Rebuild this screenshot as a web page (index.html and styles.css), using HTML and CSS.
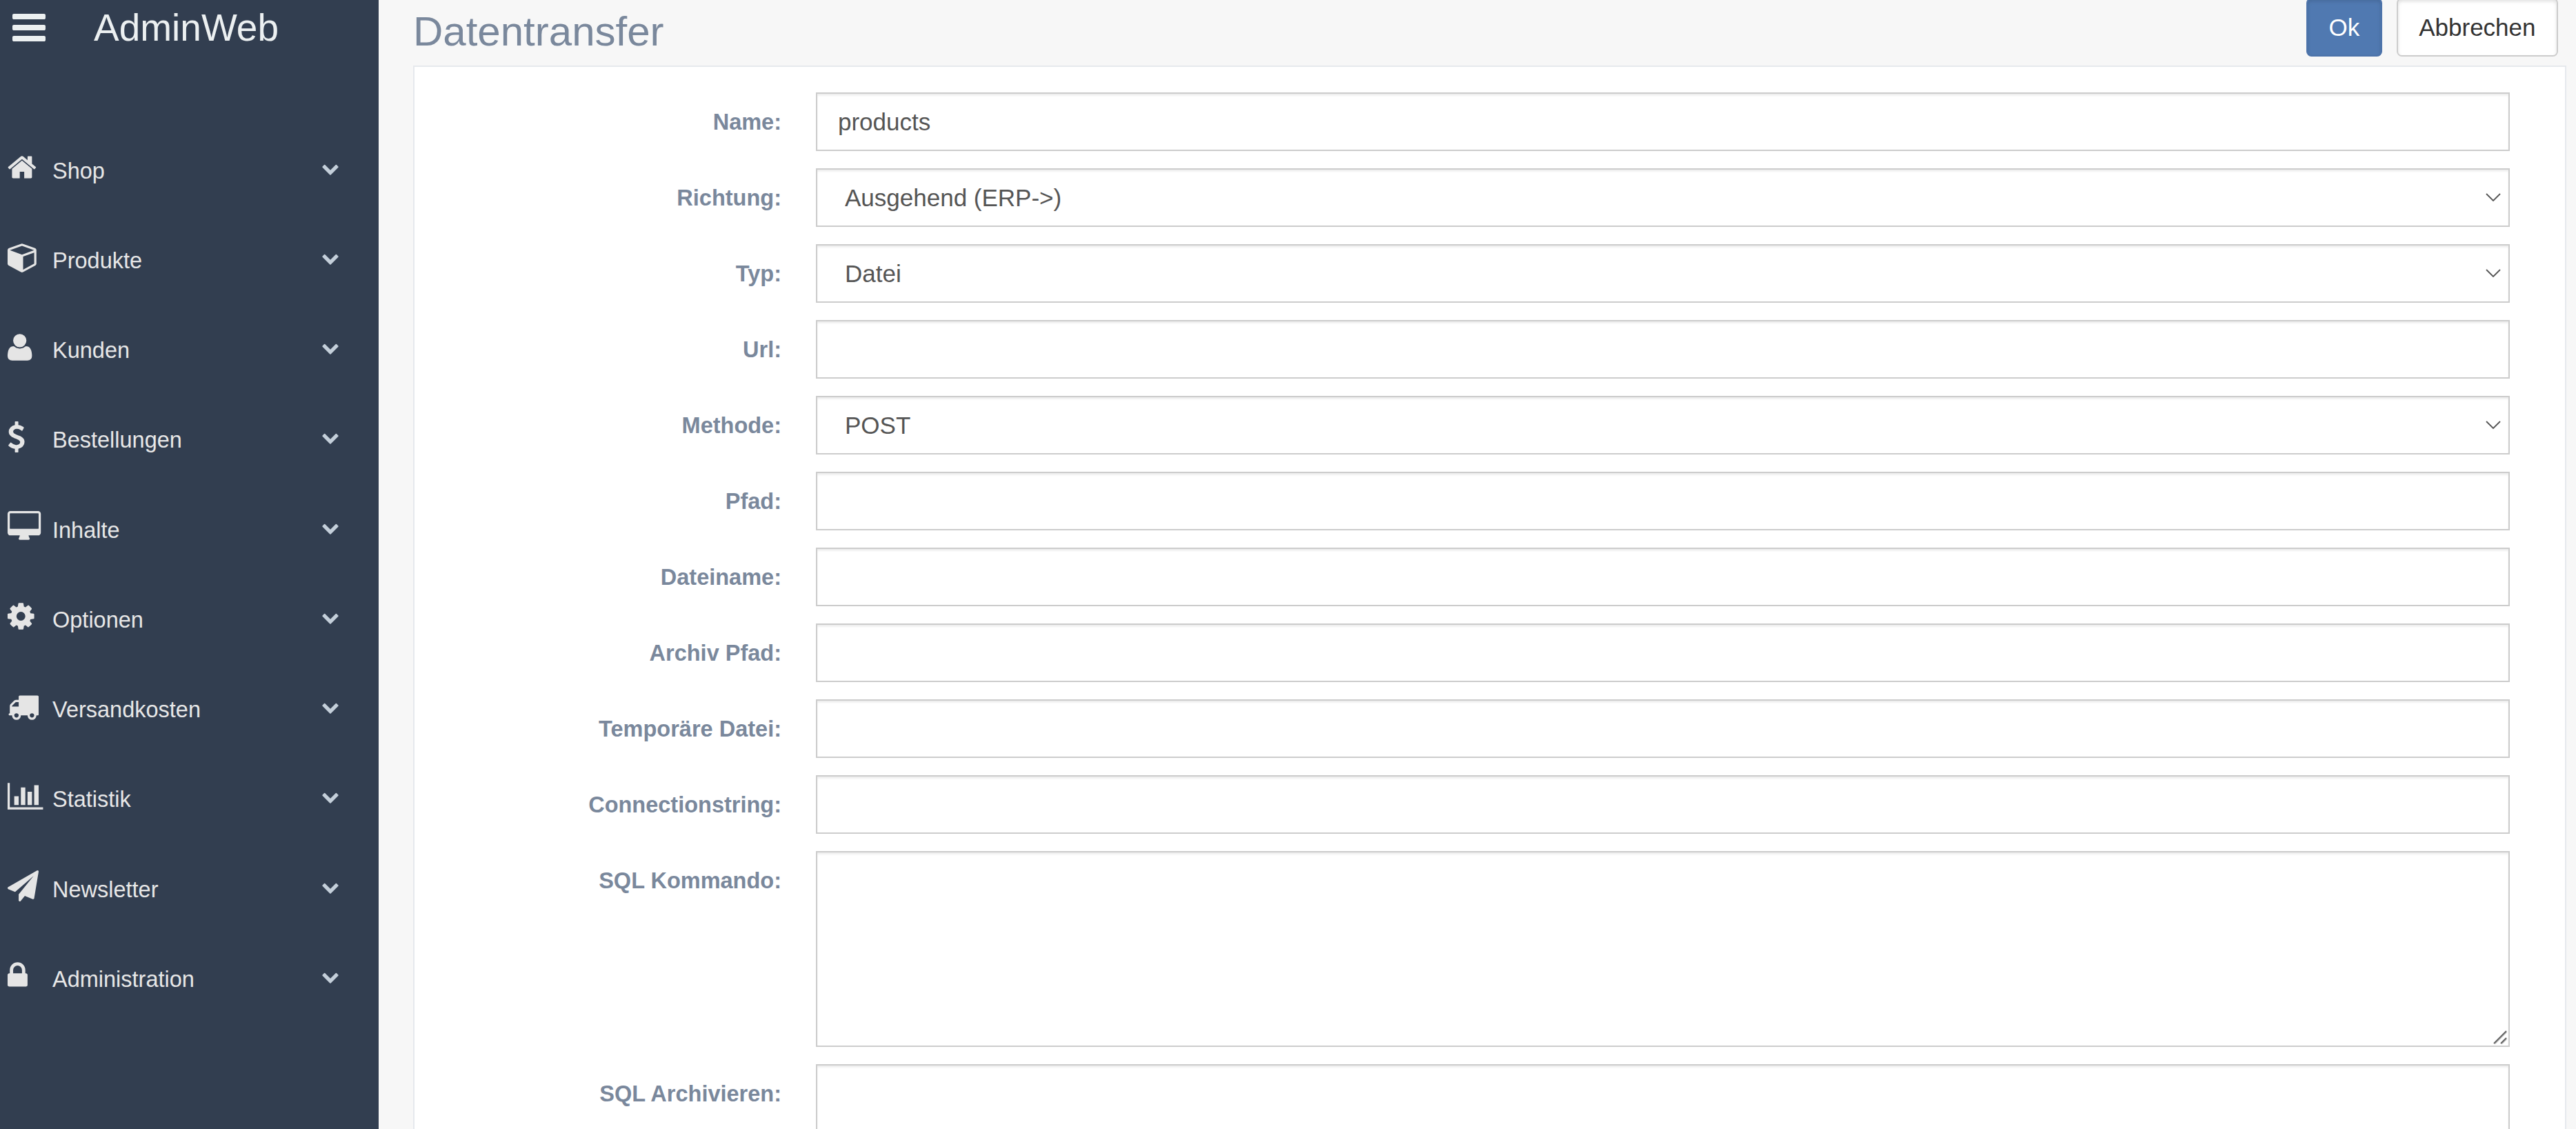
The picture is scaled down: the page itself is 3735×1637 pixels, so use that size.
FILE: index.html
```html
<!DOCTYPE html>
<html lang="de">
<head>
    <meta charset="UTF-8">
    <meta name="viewport" content="width=device-width, initial-scale=1.0">
    <title>AdminWeb - Datentransfer</title>
    <link rel="stylesheet" href="styles.css">
</head>
<body>
    <svg class="sprite">
        <symbol id="chevron" viewBox="0 0 1792 1792"><path d="M1683 808l-742 741q-19 19-45 19t-45-19l-742-741q-19-19-19-45.5t19-45.5l166-165q19-19 45-19t45 19l531 531 531-531q19-19 45-19t45 19l166 165q19 19 19 45.5t-19 45.5z"/></symbol>
        <symbol id="arrow" viewBox="0 0 22 12"><path d="M1 1l10 10 10-10" fill="none" stroke="#555" stroke-width="1.8"/></symbol>
        <symbol id="grip" viewBox="0 0 20 20"><path d="M2.5 19.5l17-17M12.5 19.5l7-7" fill="none" stroke="#c4c4c4" stroke-width="1.5"/><path d="M1 19L19 1M11 19l8-8" fill="none" stroke="#636363" stroke-width="2"/></symbol>
    </svg>
    <aside class="sidebar">
        <div class="brand">
            <svg class="menu-toggle" viewBox="128 256 1536 1280"><path d="M1664 1344v128q0 26-19 45t-45 19h-1408q-26 0-45-19t-19-45v-128q0-26 19-45t45-19h1408q26 0 45 19t19 45zm0-512v128q0 26-19 45t-45 19h-1408q-26 0-45-19t-19-45v-128q0-26 19-45t45-19h1408q26 0 45 19t19 45zm0-512v128q0 26-19 45t-45 19h-1408q-26 0-45-19t-19-45v-128q0-26 19-45t45-19h1408q26 0 45 19t19 45z"/></svg>
            <span>AdminWeb</span>
        </div>
        <ul class="nav">
            <li>
                <svg class="icon" viewBox="64 0 1792 1792"><path d="M1472 992v480q0 26-19 45t-45 19h-384v-384h-256v384h-384q-26 0-45-19t-19-45v-480q0-1 .5-3t.5-3l575-474 575 474q1 2 1 6zm223-69l-62 74q-8 9-21 11h-3q-13 0-21-7l-692-577-692 577q-12 8-24 7-13-2-21-11l-62-74q-8-10-7-23.5t11-21.5l719-599q32-26 76-26t76 26l244 204v-195q0-14 9-23t23-9h192q14 0 23 9t9 23v408l219 182q10 8 11 21.5t-7 23.5z"/></svg>
                <span>Shop</span><svg class="chevron"><use href="#chevron"/></svg>
            </li>
            <li>
                <svg class="icon" viewBox="0 0 1792 1792"><path d="M896 1629l640-349v-636l-640 233v752zm-64-865l698-254-698-254-698 254 698 254zm832-252v768q0 35-18 65t-49 47l-704 384q-28 16-61 16t-61-16l-704-384q-31-17-49-47t-18-65v-768q0-40 23-73t61-47l704-256q22-8 44-8t44 8l704 256q38 14 61 47t23 73z"/></svg>
                <span>Produkte</span><svg class="chevron"><use href="#chevron"/></svg>
            </li>
            <li>
                <svg class="icon" viewBox="0 0 1792 1792"><path transform="matrix(1 0 0 -1 0 1536)" d="M1408 131q0-120-73-189.5t-194-69.5h-874q-121 0-194 69.5t-73 189.5q0 53 3.5 103.5t14 109t26.5 108.5t43 97.5t62 81t85.5 53.5t111.5 20q9 0 42-21.5t74.5-48t108-48t133.5-21.5t133.5 21.5t108 48t74.5 48t42 21.5q61 0 111.5-20t85.5-53.5t62-81t43-97.5t26.5-108.5t14-109t3.5-103.5zM1088 1024q0-159-112.5-271.5t-271.5-112.5t-271.5 112.5t-112.5 271.5t112.5 271.5t271.5 112.5t271.5-112.5t112.5-271.5z"/></svg>
                <span>Kunden</span><svg class="chevron"><use href="#chevron"/></svg>
            </li>
            <li>
                <svg class="icon" viewBox="384 0 1792 1792"><path d="M1362 1185q0 153-99.5 263.5t-258.5 136.5v175q0 14-9 23t-23 9h-135q-13 0-22.5-9.5t-9.5-22.5v-175q-66-9-127.5-31t-101.5-44.5-74-48-46.5-37.5-17.5-18q-17-21-2-41l103-135q7-10 23-12 15-2 24 9l2 2q113 99 243 125 37 8 74 8 81 0 142.5-43t61.5-122q0-28-15-53t-33.5-42-58.5-37.5-66-32-80-32.5q-39-16-61.5-25t-61.5-26.5-62.5-31-56.5-35.5-53.5-42.5-43.5-49-35.5-58-21-66.5-8.5-78q0-138 98-242t255-134v-180q0-13 9.5-22.5t22.5-9.5h135q14 0 23 9t9 23v176q57 6 110.5 23t87 33.5 63.5 37.5 39 29 15 14q17 18 5 38l-81 146q-8 15-23 16-14 3-27-7-3-3-14.5-12t-39-26.5-58.5-32-74.5-26-85.5-11.5q-95 0-155 43t-60 111q0 26 8.5 48t29.5 41.5 39.5 33 56 31 60.5 27 70 27.5q53 20 81 31.5t76 35 75.5 42.5 62 50 53 63.5 31.5 76.5 13 94z"/></svg>
                <span>Bestellungen</span><svg class="chevron"><use href="#chevron"/></svg>
            </li>
            <li>
                <svg class="icon" viewBox="-64 0 1792 1792"><path d="M1728 992v-832q0-13-9.5-22.5t-22.5-9.5h-1600q-13 0-22.5 9.5t-9.5 22.5v832q0 13 9.5 22.5t22.5 9.5h1600q13 0 22.5-9.5t9.5-22.5zm128-832v1088q0 66-47 113t-113 47h-544q0 37 16 77.5t32 71 16 43.5q0 26-19 45t-45 19h-512q-26 0-45-19t-19-45q0-14 16-44t32-70 16-78h-544q-66 0-113-47t-47-113v-1088q0-66 47-113t113-47h1600q66 0 113 47t47 113z"/></svg>
                <span>Inhalte</span><svg class="chevron"><use href="#chevron"/></svg>
            </li>
            <li>
                <svg class="icon" viewBox="128 0 1792 1792"><path d="M1152 896q0-106-75-181t-181-75-181 75-75 181 75 181 181 75 181-75 75-181zm512-109v222q0 12-8 23t-20 13l-185 28q-19 54-39 91 35 50 107 138 10 12 10 25t-9 23q-27 37-99 108t-94 71q-12 0-26-9l-138-108q-44 23-91 38-16 136-29 186-7 28-36 28h-222q-14 0-24.5-8.5t-11.5-21.5l-28-184q-49-16-90-37l-141 107q-10 9-25 9-14 0-25-11-126-114-165-168-7-10-7-23 0-12 8-23 15-21 51-66.5t54-70.5q-27-50-41-99l-183-27q-13-2-21-12.5t-8-23.5v-222q0-12 8-23t19-13l186-28q14-46 39-92-40-57-107-138-10-12-10-24 0-10 9-23 26-36 98.5-107.5t94.5-71.5q13 0 26 10l138 107q44-23 91-38 16-136 29-186 7-28 36-28h222q14 0 24.5 8.5t11.5 21.5l28 184q49 16 90 37l142-107q9-9 24-9 13 0 25 10 129 119 165 170 7 8 7 22 0 12-8 23-15 21-51 66.5t-54 70.5q26 50 41 98l183 28q13 2 21 12.5t8 23.5z"/></svg>
                <span>Optionen</span><svg class="chevron"><use href="#chevron"/></svg>
            </li>
            <li>
                <svg class="icon" viewBox="0 0 1792 1792"><path d="M640 1408q0-52-38-90t-90-38-90 38-38 90 38 90 90 38 90-38 38-90zm-384-512h384v-256h-158q-13 0-22 9l-195 195q-9 9-9 22v30zm1280 512q0-52-38-90t-90-38-90 38-38 90 38 90 90 38 90-38 38-90zm256-1088v1024q0 15-4 26.5t-13.5 18.5-16.5 11.5-23.5 6-22.5 2-25.5 0-22.5-.5q0 106-75 181t-181 75-181-75-75-181h-384q0 106-75 181t-181 75-181-75-75-181h-64q-3 0-22.5.5t-25.5 0-22.5-2-23.5-6-16.5-11.5-13.5-18.5-4-26.5q0-26 19-45t45-19v-320q0-8-.5-35t0-38 2.5-34.5 6.5-37 14-30.5 22.5-30l198-198q19-19 50.5-32t58.5-13h160v-192q0-26 19-45t45-19h1024q26 0 45 19t19 45z"/></svg>
                <span>Versandkosten</span><svg class="chevron"><use href="#chevron"/></svg>
            </li>
            <li>
                <svg class="icon" viewBox="0 0 1792 1792"><path d="M640 896v512h-256v-512zM1024 384v1024h-256v-1024zM2048 1536v128h-2048v-1536h128v1408zM1408 640v768h-256v-768zM1792 256v1152h-256v-1152z"/></svg>
                <span>Statistik</span><svg class="chevron"><use href="#chevron"/></svg>
            </li>
            <li>
                <svg class="icon" viewBox="0 0 1792 1792"><path d="M1764 11q33 24 27 64l-256 1536q-5 29-32 45-14 8-31 8-11 0-24-5l-453-185-242 295q-18 23-49 23-13 0-22-4-19-7-30.5-23.5t-11.5-36.5v-349l864-1059-1069 925-395-162q-37-14-40-55-2-40 32-59l1664-960q15-9 32-9 20 0 36 11z"/></svg>
                <span>Newsletter</span><svg class="chevron"><use href="#chevron"/></svg>
            </li>
            <li>
                <svg class="icon" viewBox="320 0 1792 1792"><path d="M640 768h512v-192q0-106-75-181t-181-75-181 75-75 181v192zm832 96v576q0 40-28 68t-68 28h-960q-40 0-68-28t-28-68v-576q0-40 28-68t68-28h32v-192q0-184 132-316t316-132 316 132 132 316v192h32q40 0 68 28t28 68z"/></svg>
                <span>Administration</span><svg class="chevron"><use href="#chevron"/></svg>
            </li>
        </ul>
    </aside>
    <main>
        <header>
            <h1>Datentransfer</h1>
            <div class="buttons">
                <button class="btn btn-primary">Ok</button>
                <button class="btn">Abbrechen</button>
            </div>
        </header>
        <form class="panel">
            <div class="row">
                <label for="name">Name:</label>
                <input id="name" type="text" value="products">
            </div>
            <div class="row">
                <label for="richtung">Richtung:</label>
                <div class="field">
                    <select id="richtung"><option>Ausgehend (ERP-&gt;)</option></select>
                    <svg class="arrow"><use href="#arrow"/></svg>
                </div>
            </div>
            <div class="row">
                <label for="typ">Typ:</label>
                <div class="field">
                    <select id="typ"><option>Datei</option></select>
                    <svg class="arrow"><use href="#arrow"/></svg>
                </div>
            </div>
            <div class="row">
                <label for="url">Url:</label>
                <input id="url" type="text">
            </div>
            <div class="row">
                <label for="methode">Methode:</label>
                <div class="field">
                    <select id="methode"><option>POST</option></select>
                    <svg class="arrow"><use href="#arrow"/></svg>
                </div>
            </div>
            <div class="row">
                <label for="pfad">Pfad:</label>
                <input id="pfad" type="text">
            </div>
            <div class="row">
                <label for="dateiname">Dateiname:</label>
                <input id="dateiname" type="text">
            </div>
            <div class="row">
                <label for="archiv">Archiv Pfad:</label>
                <input id="archiv" type="text">
            </div>
            <div class="row">
                <label for="temp">Temporäre Datei:</label>
                <input id="temp" type="text">
            </div>
            <div class="row">
                <label for="connection">Connectionstring:</label>
                <input id="connection" type="text">
            </div>
            <div class="row">
                <label for="sql">SQL Kommando:</label>
                <div class="field">
                    <textarea id="sql"></textarea>
                    <svg class="grip"><use href="#grip"/></svg>
                </div>
            </div>
            <div class="row">
                <label for="sqlarchiv">SQL Archivieren:</label>
                <textarea id="sqlarchiv"></textarea>
            </div>
        </form>
    </main>
</body>
</html>
```
FILE: styles.css
```css
* {
    box-sizing: border-box;
}

body {
    display: flex;
    height: 1637px;
    margin: 0;
    overflow: hidden;
    background-color: #f7f7f7;
    font-family: "Liberation Sans", Arial, sans-serif;
    font-size: 32.5px;
    color: #73879c;
}

.sprite {
    display: none;
}

.sidebar {
    flex: none;
    width: 549px;
    height: 1637px;
    background-color: #323e50;
    color: #e7e7e7;
}

.brand {
    display: flex;
    align-items: center;
    gap: 70px;
    height: 80px;
    padding-left: 18px;
    color: #ecf0f1;
    font-size: 55px;
}

.menu-toggle {
    width: 48px;
    height: 40px;
    fill: #ecf0f1;
}

.nav {
    list-style: none;
    margin: 102px 0 0;
    padding: 0;
}

.nav li {
    display: flex;
    align-items: center;
    height: 130.25px;
    padding: 0 57px 0 11px;
}

.nav span {
    padding-top: 2px;
}

.icon {
    width: 45px;
    height: 45px;
    margin: 0 20px 9px 0;
    overflow: visible;
    fill: #e5e5e5;
}

.chevron {
    width: 26px;
    height: 26px;
    margin: 0 0 7px auto;
    fill: #c4cfda;
}

main {
    flex: 1;
    height: 1637px;
    padding: 0 14px 0 50px;
    overflow: hidden;
}

header {
    display: flex;
    justify-content: space-between;
    height: 95px;
    padding-right: 12px;
}

h1 {
    margin: 11px 0 0;
    font-size: 60px;
    font-weight: normal;
    line-height: 69px;
    color: #7a889c;
}

.buttons {
    display: flex;
    gap: 21px;
    margin-top: -3px;
}

.btn {
    height: 85px;
    padding: 0 30.5px;
    border: 2px solid #ccc;
    border-radius: 7.5px;
    background-color: #fff;
    box-shadow: inset 0 3px 5px rgba(0, 0, 0, 0.125);
    font-family: inherit;
    font-size: 35px;
    color: #333;
}

.btn-primary {
    border-color: #4d73aa;
    background-color: #5079b1;
    color: #fff;
}

.panel {
    padding: 37px 80px 0 0;
    border: 2px solid #e6e9ed;
    background-color: #fff;
}

.row {
    display: grid;
    grid-template-columns: 532px 1fr;
    column-gap: 50px;
    margin-bottom: 25px;
}

label {
    height: 85px;
    line-height: 86px;
    text-align: right;
    font-weight: bold;
    color: #7a889c;
}

.field {
    position: relative;
}

input, select, textarea {
    display: block;
    width: 100%;
    height: 85px;
    padding: 0 30px;
    border: 2px solid #ccc;
    border-radius: 0;
    background-color: #fff;
    box-shadow: inset 0 2.5px 2.5px rgba(0, 0, 0, 0.075);
    font-family: inherit;
    font-size: 35px;
    color: #555;
    appearance: none;
}

select {
    padding-left: 40px;
}

textarea {
    height: 284px;
    resize: none;
}

.arrow {
    position: absolute;
    right: 13px;
    top: 36px;
    width: 22px;
    height: 12px;
}

.grip {
    position: absolute;
    right: 4px;
    bottom: 4px;
    width: 20px;
    height: 20px;
}
```
